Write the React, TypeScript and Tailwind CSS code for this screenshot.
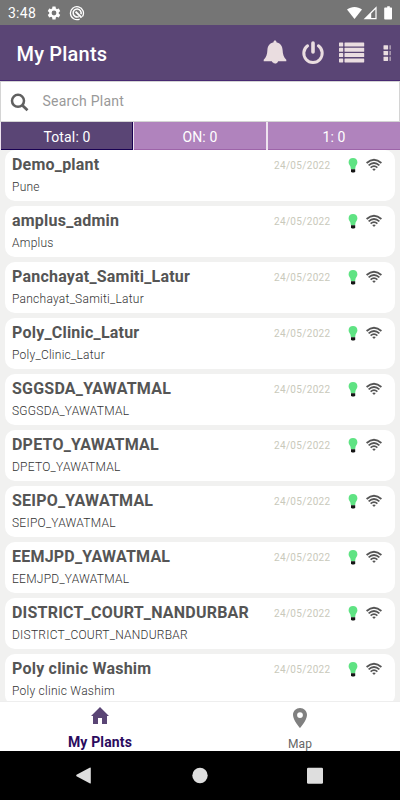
import React from "react";

const plants: [string, string][] = [
  ["Demo_plant", "Pune"],
  ["amplus_admin", "Amplus"],
  ["Panchayat_Samiti_Latur", "Panchayat_Samiti_Latur"],
  ["Poly_Clinic_Latur", "Poly_Clinic_Latur"],
  ["SGGSDA_YAWATMAL", "SGGSDA_YAWATMAL"],
  ["DPETO_YAWATMAL", "DPETO_YAWATMAL"],
  ["SEIPO_YAWATMAL", "SEIPO_YAWATMAL"],
  ["EEMJPD_YAWATMAL", "EEMJPD_YAWATMAL"],
  ["DISTRICT_COURT_NANDURBAR", "DISTRICT_COURT_NANDURBAR"],
  ["Poly clinic Washim", "Poly clinic Washim"],
];

function StatusBar() {
  return (
    <div className="flex h-[25px] shrink-0 items-center bg-[#757575] pl-2 text-white">
      <span className="w-[28px] text-[14px] leading-[25px] tracking-[0.25px] pt-px">3:48</span>
      <svg className="ml-[10px] size-4" viewBox="0 0 24 24" fill="currentColor">
        <path d="M19.14 12.94c.04-.3.06-.61.06-.94 0-.32-.02-.64-.07-.94l2.03-1.58a.49.49 0 0 0 .12-.61l-1.92-3.32a.488.488 0 0 0-.59-.22l-2.39.96c-.5-.38-1.03-.7-1.62-.94l-.36-2.54a.484.484 0 0 0-.48-.41h-3.84c-.24 0-.43.17-.47.41l-.36 2.54c-.59.24-1.13.57-1.62.94l-2.39-.96c-.22-.08-.47 0-.59.22L2.74 8.87c-.12.21-.08.47.12.61l2.03 1.58c-.05.3-.09.63-.09.94s.02.64.07.94l-2.03 1.58a.49.49 0 0 0-.12.61l1.92 3.32c.12.22.37.29.59.22l2.39-.96c.5.38 1.03.7 1.62.94l.36 2.54c.05.24.24.41.48.41h3.84c.24 0 .44-.17.47-.41l.36-2.54c.59-.24 1.13-.56 1.62-.94l2.39.96c.22.08.47 0 .59-.22l1.92-3.32c.12-.22.07-.47-.12-.61l-2.01-1.58zM12 15.6A3.6 3.6 0 1 1 12 8.4a3.6 3.6 0 0 1 0 7.2z" />
      </svg>
      <svg className="ml-[7px] size-4" viewBox="0 0 16 16" fill="none" stroke="currentColor">
        <path d="M10.6 14.1A6.5 6.5 0 1 1 13.4 11.7" strokeWidth="1.3" />
        <path d="M9.8 11.6A4 4 0 1 1 11.9 9.3" strokeWidth="1.5" />
        <path d="M6.6 6.6L12.6 12.6" strokeWidth="2" />
      </svg>
      <svg className="ml-auto mr-[7px] h-[14px] w-[46px]" viewBox="0 0 46 14" fill="currentColor">
        <path d="M0 3.5C4.3 0 10.7 0 15 3.5L7.5 13Z" />
        <path fillRule="evenodd" d="M29.6.3V13.3H16.6ZM28.4 3.3L24.2 7.5V12.1H28.4Z" />
        <path d="M38.6 1.5H40.2V.2H42.8V1.5H44.4Q45 1.5 45 2.3V12.8Q45 13.5 44.2 13.5H38Q37.2 13.5 37.2 12.8V2.3Q37.2 1.5 38 1.5Z" />
      </svg>
    </div>
  );
}

function Header() {
  return (
    <header className="flex h-[56px] shrink-0 items-center border-b border-[#472971] bg-[#5a4575] pl-[16.5px] text-[#eadde0]">
      <h1 className="pt-[3px] text-[20px] font-medium tracking-[0.2px] text-white">My Plants</h1>
      <svg className="ml-auto h-[25px] w-[24px]" viewBox="0 0 24 25" fill="currentColor">
        <path d="M12 .5C13 .5 13.5 1.2 13.4 2.2C17.3 3 19.4 6.2 19.6 10C19.8 14.5 20.6 17 23.3 19.8V21.2H15.2A3.3 3.3 0 0 1 8.8 21.2H.7V19.8C3.4 17 4.2 14.5 4.4 10C4.6 6.2 6.7 3 10.6 2.2C10.5 1.2 11 .5 12 .5Z" />
        <path d="M9.6 22.2Q10.3 24.3 12.2 24" fill="none" stroke="#5a4575" strokeWidth=".6" />
      </svg>
      <svg className="ml-[14px] h-6 w-[24px]" viewBox="0 0 24 24" fill="none" stroke="currentColor" strokeLinecap="round">
        <path d="M6.6 4.8A9.2 9.2 0 1 0 17.4 4.8" strokeWidth="3" />
        <path d="M12 2V11" strokeWidth="3.6" />
      </svg>
      <svg className="ml-[14px] h-[22px] w-[26px]" viewBox="0 0 26 22" fill="currentColor">
        {[0.5, 5.8, 11.1, 16.4].map((y) => (
          <g key={y}>
            <rect x="0" y={y} width="4.2" height="4" rx=".6" />
            <rect x="5.5" y={y} width="19.7" height="4" rx=".6" />
          </g>
        ))}
      </svg>
      <svg className="ml-[18px] mr-[8px] h-[18px] w-[9px]" viewBox="0 0 9 18" fill="currentColor">
        {[1.3, 7, 12.7].map((y) => (
          <g key={y}>
            <rect x="0.5" y={y} width="4.6" height="4.2" rx=".4" />
            <rect x="6.4" y={y} width="1.5" height="4.2" opacity=".6" />
          </g>
        ))}
      </svg>
    </header>
  );
}

function PlantCard({ name, place }: { name: string; place: string }) {
  return (
    <div className="mx-[5px] mb-[5px] flex h-[51px] shrink-0 rounded-[10px] bg-white pl-[7px] pr-[13px]">
      <div className="min-w-0 flex-1">
        <div className="mt-[5px] whitespace-nowrap text-[16px] font-bold leading-[20px] tracking-[0.22px] text-[#555]">{name}</div>
        <div className="mt-[4px] whitespace-nowrap text-[12px] font-light leading-[16px] tracking-[0.25px] text-[#333]">{place}</div>
      </div>
      <div className="mt-[8px] flex h-4 items-center">
        <span className="-mt-[2px] w-[57px] whitespace-nowrap text-[10px] tracking-[0.33px] text-[#c9c9bb]">24/05/2022</span>
        <svg className="ml-[17px] h-4 w-[10px]" viewBox="0 0 10 16">
          <path d="M2.9 11.2L2.4 8.6C1.7 7 .6 6 .6 4.2C.6 1.6 2.4 0 5 0S9.4 1.6 9.4 4.2C9.4 6 8.3 7 7.6 8.6L7.1 11.2Z" fill="#5fe383" />
          <path d="M3 11.2H7.2V13.4L6.3 14.6H3.9L3 13.4Z" fill="#151515" />
        </svg>
        <svg className="ml-[8px] h-4 w-4" viewBox="0 0 16 16" fill="none" stroke="#555">
          <path d="M.6 5Q8-1.6 15.4 5" strokeWidth="1.8" />
          <path d="M2.6 7.4Q8 2.6 13.4 7.4" strokeWidth="1.7" />
          <path d="M4.6 9.7Q8 6.7 11.4 9.7" strokeWidth="1.6" />
          <path d="M6.2 11.1Q8 9.8 9.8 11.1L8 13Z" fill="#555" stroke="none" />
        </svg>
      </div>
    </div>
  );
}

export default function App() {
  return (
    <div className="flex h-[800px] w-[400px] flex-col overflow-hidden bg-[#f1f1f0] font-[Roboto,sans-serif]">
      <StatusBar />
      <Header />
      <div className="flex h-[41px] shrink-0 items-center border border-[#d4d4d4] bg-white pl-[9px]">
        <svg className="mt-[2px] h-[19px] w-[19px]" viewBox="0 0 19 19" fill="none" stroke="#606060">
          <circle cx="8" cy="7.8" r="6" strokeWidth="2.5" />
          <path d="M12 12L17.5 17.2" strokeWidth="2.8" />
        </svg>
        <span className="ml-[13.5px] text-[14px] tracking-[0.25px] text-[#999]">Search Plant</span>
      </div>
      <div className="flex h-[28px] shrink-0 gap-px bg-[#eee3ef] pl-px text-center text-[14px] leading-[30px] tracking-[0.15px] text-white">
        <div className="w-[132px] border-b border-r border-[#180052] bg-[#5a4575] pl-px">Total: 0</div>
        <div className="w-[132px] border-b border-[#9d64a9] bg-[#b083bd]">ON: 0</div>
        <div className="ml-px flex-1 border-b border-[#9d64a9] bg-[#b083bd]">1: 0</div>
      </div>
      <main className="flex min-h-0 flex-1 flex-col overflow-hidden">
        {plants.map(([name, place]) => (
          <PlantCard key={name} name={name} place={place} />
        ))}
      </main>
      <nav className="flex h-[50px] shrink-0 border-t border-[#eee] bg-white text-center">
        <div className="flex flex-1 flex-col items-center pt-[2px]">
          <svg className="size-6 shrink-0" viewBox="0 0 24 24" fill="#5a4575">
            <path d="M10 20v-6h4v6h5v-8h2L12 3 3 12h2v8z" />
          </svg>
          <span className="mt-[4px] text-[14px] font-bold leading-[20px] tracking-[0.15px] text-[#2a0a5e]">My Plants</span>
        </div>
        <div className="flex flex-1 flex-col items-center pt-[4px]">
          <svg className="h-6 w-6 shrink-0" viewBox="0 0 24 24" fill="#808080">
            <path d="M12 2C8.13 2 5 5.13 5 9c0 5.25 7 13 7 13s7-7.75 7-13c0-3.87-3.13-7-7-7zm0 10a2.9 2.9 0 1 1 0-5.8 2.9 2.9 0 0 1 0 5.8z" />
          </svg>
          <span className="mt-[5px] text-[12px] leading-[18px] tracking-[0.1px] text-[#666]">Map</span>
        </div>
      </nav>
      <div className="flex h-[49px] shrink-0 items-center bg-black">
        <svg className="h-[17px] w-[400px]" viewBox="0 0 400 17" fill="#dedede">
          <path d="M90.8 1.3V15.7Q90.8 17 89.6 16.3L76.5 9.2Q75.8 8.5 76.5 7.8L89.6.7Q90.8 0 90.8 1.3Z" />
          <circle cx="200" cy="8.5" r="7.7" />
          <rect x="307" y=".7" width="16" height="16" rx="1.3" />
        </svg>
      </div>
    </div>
  );
}
